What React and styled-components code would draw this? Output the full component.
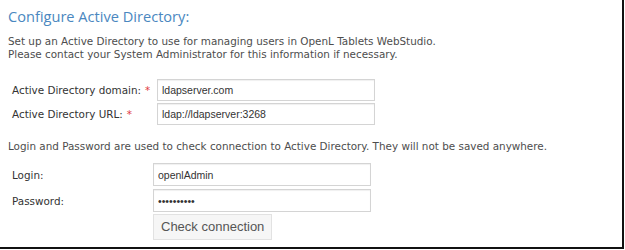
import React from "react";
import styled, { createGlobalStyle } from "styled-components";

const GlobalStyle = createGlobalStyle`
  html, body {
    margin: 0;
    padding: 0;
    background: #fff;
  }
`;

const Frame = styled.div`
  box-sizing: border-box;
  width: 624px;
  height: 249px;
  border-right: 2px solid #111;
  border-bottom: 2px solid #111;
  padding: 5px 0 0 8px;
  font-family: "DejaVu Sans", Verdana, sans-serif;
  font-size: 10.4px;
  color: #4d4d4d;
`;

const Title = styled.h2`
  margin: 0;
  font-family: "Open Sans", "Segoe UI", sans-serif;
  font-weight: 400;
  font-size: 14.6px;
  line-height: 22px;
  color: #4a87c0;
`;

const Text = styled.p`
  margin: ${(p) => p.margin || "0"};
  line-height: 13px;
`;

const Form = styled.div`
  display: grid;
  grid-template-columns: ${(p) => p.labelWidth}px ${(p) => p.inputWidth}px;
  grid-auto-rows: ${(p) => p.rowHeight}px;
  row-gap: ${(p) => p.gap}px;
  align-items: center;
  margin: ${(p) => p.margin || "0"};
  padding-left: 4px;
`;

const Label = styled.label`
  color: #333;
`;

const Required = styled.span`
  color: #e0393e;
  margin-left: 4px;
`;

const Input = styled.input`
  box-sizing: border-box;
  width: 100%;
  height: 100%;
  margin: 0;
  padding: 0 4px;
  border: 1px solid #d4d4d4;
  border-radius: 0;
  box-shadow: inset 0 1px 1px #f0f0f0;
  font-family: "Liberation Sans", Arial, sans-serif;
  font-size: 10.5px;
  color: #333;
  outline: none;
`;

const Button = styled.button`
  grid-column: 2;
  justify-self: start;
  box-sizing: border-box;
  height: 26px;
  padding: 0 7px;
  border: 1px solid #e2e2e2;
  background: #f6f6f6;
  font-family: "Liberation Sans", Arial, sans-serif;
  font-size: 13px;
  color: #555;
`;

export default function App() {
  return (
    <>
      <GlobalStyle />
      <Frame>
        <Title>Configure Active Directory:</Title>
        <Text margin="8px 0 0">
          Set up an Active Directory to use for managing users in OpenL Tablets WebStudio.
          <br />
          Please contact your System Administrator for this information if necessary.
        </Text>
        <Form labelWidth={145} inputWidth={218} rowHeight={22} gap={2} margin="18px 0 0">
          <Label>
            Active Directory domain:<Required>*</Required>
          </Label>
          <Input defaultValue="ldapserver.com" />
          <Label>
            Active Directory URL:<Required>*</Required>
          </Label>
          <Input defaultValue="ldap://ldapserver:3268" />
        </Form>
        <Text margin="15px 0 0">
          Login and Password are used to check connection to Active Directory. They will not be saved anywhere.
        </Text>
        <Form labelWidth={141} inputWidth={218} rowHeight={23} gap={3} margin="10px 0 0">
          <Label>Login:</Label>
          <Input defaultValue="openlAdmin" />
          <Label>Password:</Label>
          <Input type="password" defaultValue="openlAdmin" />
          <Button>Check connection</Button>
        </Form>
      </Frame>
    </>
  );
}
